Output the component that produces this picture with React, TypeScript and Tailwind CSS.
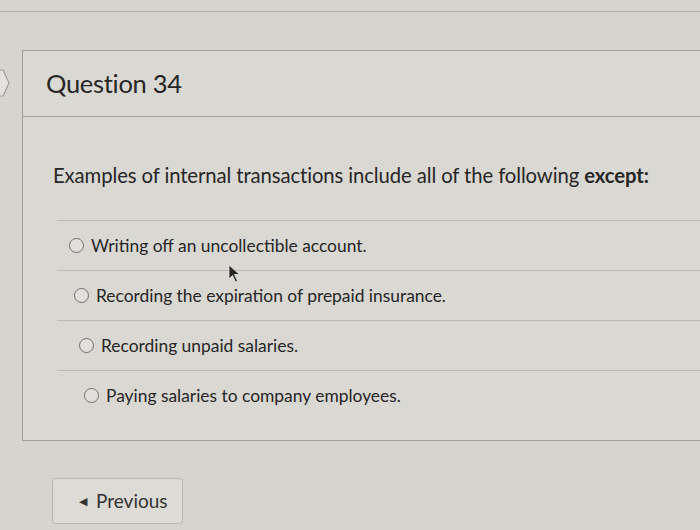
import React from "react";

const options = [
  "Writing off an uncollectible account.",
  "Recording the expiration of prepaid insurance.",
  "Recording unpaid salaries.",
  "Paying salaries to company employees.",
];

function Radio() {
  return <span className="inline-block h-[15px] w-[15px] shrink-0 rounded-full border-[1.5px] border-[#6f6e6b] bg-[#e2e0dc]" />;
}

export default function App() {
  return (
    <div
      className="relative h-[530px] w-[700px] overflow-hidden bg-[#d6d4cf] text-[#333333]"
      style={{ fontFamily: "Lato, 'Open Sans', sans-serif" }}
    >
      {/* top rule of previous question */}
      <div className="h-[12px] border-b border-[#b3b1ac]" />

      {/* left flag marker */}
      <svg className="absolute left-0 top-[68px]" width="10" height="30" viewBox="0 0 10 30">
        <path d="M0 2 L3 2 L9 15 L3 28 L0 28" fill="#e4e2de" stroke="#9e9c98" strokeWidth="1.2" />
      </svg>

      {/* mouse pointer */}
      <svg className="absolute left-[228px] top-[264px]" width="14" height="20" viewBox="0 0 14 20">
        <path d="M1 1 L1 15 L4.5 11.5 L7.5 18 L9.5 17 L6.5 10.5 L11.5 10.5 Z" fill="#262626" stroke="#e8e6e2" strokeWidth="0.8" strokeLinejoin="round" />
      </svg>

      <div className="ml-[22px] mt-[38px] border-l border-t border-b border-[#9f9d99] bg-[#dad8d3]">
        {/* header */}
        <div className="flex h-[66px] items-center border-b border-[#a7a5a1] pl-[23px]">
          <h2 className="text-[25.5px] font-normal tracking-[-0.3px] text-[#262626]">Question 34</h2>
        </div>

        {/* body */}
        <div className="pl-[30px] pt-[43px] pb-[20px]">
          <p className="text-[20.3px] tracking-[-0.1px] text-[#262626]">
            Examples of internal transactions include all of the following <strong className="font-bold">except:</strong>
          </p>
          <div className="mt-[30px] ml-[4px]">
            {options.map((o, i) => (
              <div key={o} className="border-t border-[#bcbab5]">
                <label
                  className="flex h-[49px] items-center gap-[7px] text-[17.4px] text-[#262626]"
                  style={{ paddingLeft: 12 + i * 5 }}
                >
                  <Radio />
                  <span>{o}</span>
                </label>
              </div>
            ))}
          </div>
        </div>
      </div>

      {/* previous button */}
      <div className="ml-[52px] mt-[37px]">
        <button className="flex h-[46px] w-[131px] items-center gap-[9px] rounded-[3px] border border-[#b9b7b2] bg-[#dddbd6] pl-[26px] text-[19px] text-[#333333]">
          <span className="text-[11px]">◀</span>
          <span>Previous</span>
        </button>
      </div>
    </div>
  );
}
